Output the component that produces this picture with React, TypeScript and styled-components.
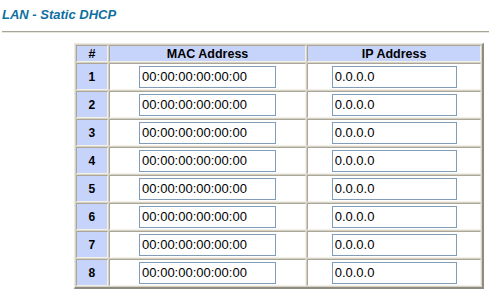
import React from 'react'
import styled, { createGlobalStyle } from 'styled-components'

const GlobalStyle = createGlobalStyle`
  body {
    margin: 0;
    background: #fff;
    font-family: 'Liberation Sans', Arial, sans-serif;
  }
`

const Page = styled.div`
  width: 490px;
  height: 308px;
  padding-top: 6px;
  box-sizing: border-box;
`

const Title = styled.h1`
  margin: 0 0 0 2px;
  font-size: 13px;
  line-height: 17px;
  font-weight: bold;
  font-style: italic;
  color: #0f6f9f;
`

const Rule = styled.div`
  margin: 8px 1px 0 2px;
  height: 1px;
  background: #a8a498;
  border-bottom: 1px solid #e8e6dc;
`

const Table = styled.table`
  margin: 10px 0 0 74px;
  width: 410px;
  border-collapse: separate;
  border-spacing: 1px;
  background: #d6d3c6;
  border-style: solid;
  border-width: 1px 2px 2px 1px;
  border-color: #ecebe2 #8e8b80 #8e8b80 #ecebe2;
  box-sizing: border-box;
`

const HeadCell = styled.th<{ w: number }>`
  width: ${({ w }) => w}px;
  height: 15px;
  padding: 0;
  background: #c6d3fb;
  border: 1px solid;
  border-color: #a9a598 #f2f0e8 #f2f0e8 #a9a598;
  font-size: 12.5px;
  font-weight: bold;
  color: #000;
  text-align: center;
  box-sizing: content-box;
`

const Cell = styled.td<{ num?: boolean }>`
  height: 25px;
  padding: 0;
  background: ${({ num }) => (num ? '#c6d3fb' : '#fff')};
  border: 1px solid;
  border-color: #a9a598 #f2f0e8 #f2f0e8 #a9a598;
  text-align: center;
  vertical-align: middle;
  font-size: 12px;
  font-weight: bold;
  color: #000;
  box-sizing: content-box;
`

const Field = styled.input<{ w: number }>`
  display: block;
  margin: 0 auto;
  width: ${({ w }) => w}px;
  height: 22px;
  box-sizing: border-box;
  padding: 0 2px;
  border: 1px solid #7f9db9;
  background: #fff;
  font-family: 'Liberation Sans', Arial, sans-serif;
  font-size: 13px;
  color: #000;
  outline: none;
`

const rows = [1, 2, 3, 4, 5, 6, 7, 8].map((n) => ({
  id: n,
  mac: '00:00:00:00:00:00',
  ip: '0.0.0.0',
}))

const App: React.FC = () => {
  return (
    <>
      <GlobalStyle />
      <Page>
        <Title>LAN - Static DHCP</Title>
        <Rule />
        <Table>
          <thead>
            <tr>
              <HeadCell w={30}>#</HeadCell>
              <HeadCell w={196}>MAC Address</HeadCell>
              <HeadCell w={172}>IP Address</HeadCell>
            </tr>
          </thead>
          <tbody>
            {rows.map((row) => (
              <tr key={row.id}>
                <Cell num>{row.id}</Cell>
                <Cell>
                  <Field w={137} defaultValue={row.mac} />
                </Cell>
                <Cell>
                  <Field w={125} defaultValue={row.ip} />
                </Cell>
              </tr>
            ))}
          </tbody>
        </Table>
      </Page>
    </>
  )
}

export default App
